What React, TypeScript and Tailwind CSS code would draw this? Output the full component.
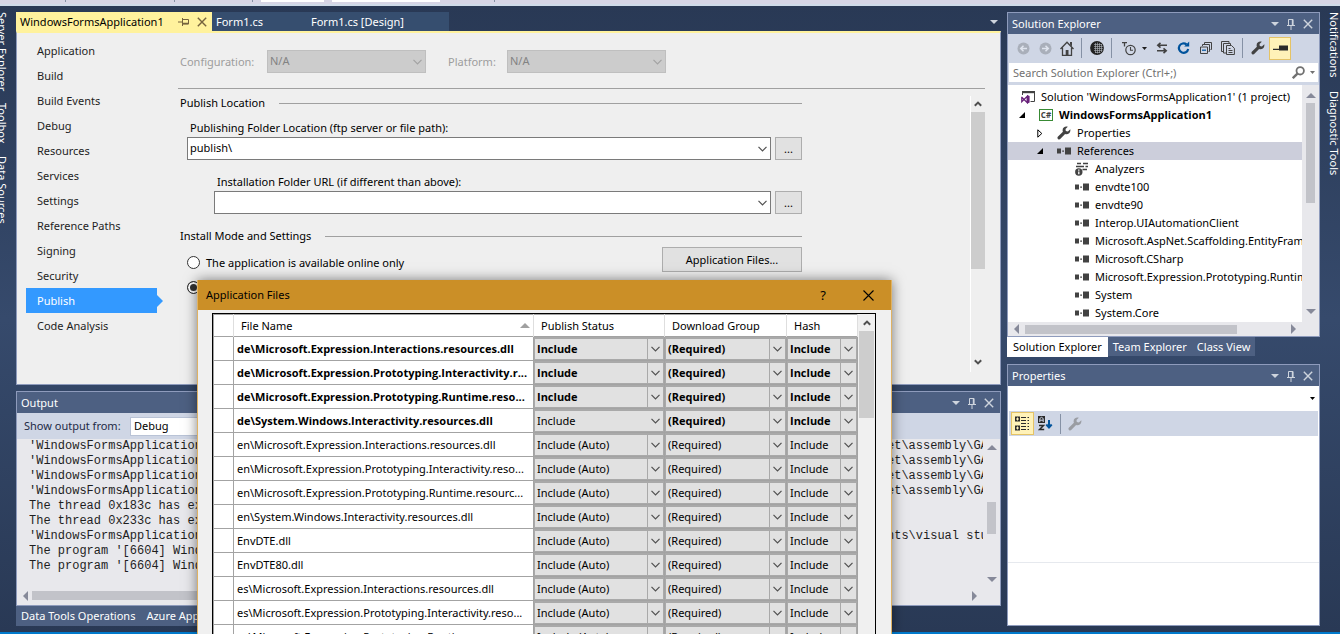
import React from "react";
import clsx from "clsx";

const navItems = [
  "Application",
  "Build",
  "Build Events",
  "Debug",
  "Resources",
  "Services",
  "Settings",
  "Reference Paths",
  "Signing",
  "Security",
  "Publish",
  "Code Analysis",
];

const files = [
  { name: "de\\Microsoft.Expression.Interactions.resources.dll", status: "Include", bold: true },
  { name: "de\\Microsoft.Expression.Prototyping.Interactivity.r...", status: "Include", bold: true },
  { name: "de\\Microsoft.Expression.Prototyping.Runtime.reso...", status: "Include", bold: true },
  { name: "de\\System.Windows.Interactivity.resources.dll", status: "Include", bold: true, editing: true },
  { name: "en\\Microsoft.Expression.Interactions.resources.dll", status: "Include (Auto)" },
  { name: "en\\Microsoft.Expression.Prototyping.Interactivity.reso...", status: "Include (Auto)" },
  { name: "en\\Microsoft.Expression.Prototyping.Runtime.resourc...", status: "Include (Auto)" },
  { name: "en\\System.Windows.Interactivity.resources.dll", status: "Include (Auto)" },
  { name: "EnvDTE.dll", status: "Include (Auto)" },
  { name: "EnvDTE80.dll", status: "Include (Auto)" },
  { name: "es\\Microsoft.Expression.Interactions.resources.dll", status: "Include (Auto)" },
  { name: "es\\Microsoft.Expression.Prototyping.Interactivity.reso...", status: "Include (Auto)" },
  { name: "es\\Microsoft.Expression.Prototyping.Runtime.resourc...", status: "Include (Auto)" },
];

const references = [
  "envdte100",
  "envdte90",
  "Interop.UIAutomationClient",
  "Microsoft.AspNet.Scaffolding.EntityFramework",
  "Microsoft.CSharp",
  "Microsoft.Expression.Prototyping.Runtime",
  "System",
  "System.Core",
];

const outputLines = [
  { head: "'WindowsFormsApplication", tail: "et\\assembly\\GAC" },
  { head: "'WindowsFormsApplication", tail: "et\\assembly\\GAC" },
  { head: "'WindowsFormsApplication", tail: "et\\assembly\\GAC" },
  { head: "'WindowsFormsApplication", tail: "et\\assembly\\GAC" },
  { head: "The thread 0x183c has ex", tail: "" },
  { head: "The thread 0x233c has ex", tail: "" },
  { head: "'WindowsFormsApplication", tail: "nts\\visual stu" },
  { head: "The program '[6604] Wind", tail: "" },
  { head: "The program '[6604] Wind", tail: "" },
];

/* === ICONS === */

function Chevron({ className }: { className?: string }) {
  return (
    <svg viewBox="0 0 9 6" className={clsx("h-[6px] w-[9px] fill-none stroke-current", className)}>
      <path d="M0.5 0.8 L4.5 4.8 L8.5 0.8" strokeWidth="1.2" />
    </svg>
  );
}

function ScrollChevron({ down }: { down?: boolean }) {
  return (
    <svg viewBox="0 0 8 6" className={clsx("h-[6px] w-[8px] shrink-0 fill-none stroke-[#505050]", down && "rotate-180")}>
      <path d="M0.8 4.8 L4 1.6 L7.2 4.8" strokeWidth="2" />
    </svg>
  );
}

function Triangle({ className }: { className?: string }) {
  return (
    <svg viewBox="0 0 10 5" className={clsx("h-[5px] w-[10px] shrink-0 fill-current", className)}>
      <path d="M0 5 L5 0 L10 5 Z" />
    </svg>
  );
}

function Caret({ className }: { className?: string }) {
  return (
    <svg viewBox="0 0 8 4" className={clsx("h-[4px] w-[8px] shrink-0 fill-current", className)}>
      <path d="M0 0 H8 L4 4 Z" />
    </svg>
  );
}

function SideArrow({ right }: { right?: boolean }) {
  return (
    <svg viewBox="0 0 5 10" className={clsx("h-[10px] w-[5px] shrink-0 fill-[#868999]", right && "rotate-180")}>
      <path d="M5 0 V10 L0 5 Z" />
    </svg>
  );
}

function PinIcon({ className }: { className?: string }) {
  return (
    <svg viewBox="0 0 8 12" className={clsx("h-[12px] w-[8px] fill-none stroke-current", className)}>
      <path d="M1.5 7 V1.5 H6 V7 M0 7.5 H8 M4 8 V12" />
      <path d="M5.5 1.5 V7" strokeWidth="1.4" />
    </svg>
  );
}

function CloseIcon({ className }: { className?: string }) {
  return (
    <svg viewBox="0 0 10 10" className={clsx("h-[10px] w-[10px] fill-none stroke-current", className)}>
      <path d="M0.8 0.8 L9.2 9.2 M9.2 0.8 L0.8 9.2" strokeWidth="1.4" />
    </svg>
  );
}

function WrenchIcon({ className }: { className?: string }) {
  return (
    <svg viewBox="0 0 14 14" className={clsx("h-[14px] w-[14px] shrink-0 fill-current", className)}>
      <path d="M13.3 3.2 L10.9 5.4 L8.8 5 L8.5 3 L10.8 0.8 C8.6 -0.1 5.6 1.2 5.6 4.2 C5.6 4.8 5.7 5.3 5.9 5.8 L0.8 10.7 C-0.4 12.2 1.7 14.3 3.2 13.1 L8.1 8 C10.9 9 14 6.6 13.3 3.2 Z" />
    </svg>
  );
}

function ReferenceIcon() {
  return (
    <svg viewBox="0 0 14 8" className="h-[8px] w-[14px] shrink-0 fill-[#424242]">
      <path d="M0 1.5 H4 V6.5 H0 Z M5.2 3.5 H7 V4.8 H5.2 Z M8 0.5 H14 V7.5 H8 Z" />
    </svg>
  );
}

function SearchIcon() {
  return (
    <svg viewBox="0 0 13 13" className="h-[13px] w-[13px] fill-none stroke-[#717171]">
      <circle cx="8.2" cy="4.8" r="3.7" strokeWidth="1.8" />
      <path d="M5.4 7.6 L0.8 12.2" strokeWidth="2.4" />
    </svg>
  );
}

/* === SHARED CONTROLS === */

function Combo({
  label,
  value,
  id,
  disabled,
  className,
}: {
  label?: string;
  value: string;
  id?: string;
  disabled?: boolean;
  className?: string;
}) {
  return (
    <div className={clsx("relative h-[23px]", className)}>
      <select
        id={id}
        aria-label={label}
        disabled={disabled}
        className={clsx(
          "h-full w-full appearance-none border px-[2px] pb-px",
          disabled ? "border-[#bfbfbf] bg-[#cccccc] text-[#838383]" : "border-[#7a7a7a] bg-white text-black"
        )}
      >
        <option>{value}</option>
      </select>
      <Chevron
        className={clsx(
          "pointer-events-none absolute right-[4px] top-[9px]",
          disabled ? "text-[#a3a3a3]" : "text-[#505050]"
        )}
      />
    </div>
  );
}

function CellSelect({ label, value, editing }: { label: string; value: string; editing?: boolean }) {
  return (
    <div className="relative h-[23px] border border-t-2 border-[#a9a9a9] bg-[#e1e1e1]">
      <select aria-label={label} className="h-full w-full appearance-none pl-[2px] pr-[17px] pb-px">
        <option>{value}</option>
      </select>
      <span
        className={clsx(
          "pointer-events-none absolute inset-y-0 right-0 flex w-[16px] items-center justify-center text-[#505050]",
          !editing && "border-l border-[#a9a9a9]"
        )}
      >
        <Chevron />
      </span>
    </div>
  );
}

function PanelTitle({ title }: { title: string }) {
  return (
    <header className="flex h-[21px] shrink-0 items-center bg-[#4d6082] pl-1 pr-[6px] text-white">
      <h2 className="flex-1">{title}</h2>
      <div className="flex items-center gap-2 text-[#ced4dd]">
        <button aria-label={`${title} window position`}>
          <Caret />
        </button>
        <button aria-label={`Auto hide ${title}`}>
          <PinIcon />
        </button>
        <button aria-label={`Close ${title}`}>
          <CloseIcon />
        </button>
      </div>
    </header>
  );
}

function Rail({ items, className }: { items: string[]; className?: string }) {
  return (
    <nav className={clsx("flex shrink-0 flex-col text-white", className)}>
      {items.map((item) => (
        <button key={item} className="w-4 whitespace-nowrap text-left leading-4 [writing-mode:vertical-rl]">
          {item}
        </button>
      ))}
    </nav>
  );
}

/* === DOCUMENT AREA === */

function DocumentTabs() {
  return (
    <div className="flex h-[19px] shrink-0 items-stretch text-white">
      <div className="flex w-[196px] items-center bg-[#fff29d] pl-1 text-black">
        <span className="flex-1">WindowsFormsApplication1</span>
        <button aria-label="Pin tab" className="px-1 text-[#75633d]">
          <PinIcon className="rotate-90" />
        </button>
        <button aria-label="Close tab" className="px-[5px] text-[#75633d]">
          <CloseIcon />
        </button>
      </div>
      <button className="w-[95px] bg-[#364e6f] pl-1 text-left">Form1.cs</button>
      <button className="w-[142px] bg-[#364e6f] pl-1 text-left">Form1.cs [Design]</button>
      <button aria-label="Open documents" className="ml-auto px-[3px] text-[#ced4dd]">
        <Caret />
      </button>
    </div>
  );
}

function SectionHeading({ children }: { children: React.ReactNode }) {
  return (
    <div className="flex h-[18px] items-center gap-[14px]">
      <h3>{children}</h3>
      <span className="h-px flex-1 bg-[#a0a0a0]" />
    </div>
  );
}

function BrowseButton({ label }: { label: string }) {
  return (
    <button aria-label={label} className="h-[23px] w-[27px] shrink-0 border border-[#adadad] bg-[#e1e1e1]">
      ...
    </button>
  );
}

function PublishPage() {
  return (
    <div className="flex min-h-0 flex-1 border border-t-2 border-[#8e9bbc] border-t-[#fff29d] bg-[#efefef] text-[#1e1e1e]">
      <nav className="w-[147px] shrink-0 pl-[9px] pt-[5px]">
        {navItems.map((item) => {
          const active = item === "Publish";
          return (
            <div key={item} className="flex h-[25px] items-center">
              <a
                href="#"
                className={clsx("flex h-full w-[131px] items-center pl-[11px]", active && "bg-[#3399ff] text-white")}
              >
                {item}
              </a>
              {active && (
                <svg viewBox="0 0 6 12" className="h-[12px] w-[6px] fill-[#3399ff]">
                  <path d="M0 0 L6 6 L0 12 Z" />
                </svg>
              )}
            </div>
          );
        })}
      </nav>

      <div className="flex min-w-0 flex-1 flex-col pb-3 pl-[14px] pr-[15px] pt-[17px]">
        <div className="flex h-[39px] items-start border-b border-[#a0a0a0] pl-[2px] text-[#9d9d9d]">
          <label htmlFor="configuration" className="w-[87px] leading-[23px]">
            Configuration:
          </label>
          <Combo id="configuration" value="N/A" disabled className="w-[159px]" />
          <label htmlFor="platform" className="ml-[22px] w-[59px] leading-[23px]">
            Platform:
          </label>
          <Combo id="platform" value="N/A" disabled className="w-[159px]" />
        </div>

        <div className="flex min-h-0 flex-1 text-black">
          <div className="min-w-0 flex-1 overflow-hidden pl-[2px] pt-[5px]">
            <div className="w-[622px] max-w-full">
              <SectionHeading>Publish Location</SectionHeading>
              <div className="pl-[7px] pt-2">
                <label htmlFor="publish-folder" className="block pl-[3px] leading-4">
                  Publishing Folder Location (ftp server or file path):
                </label>
                <div className="mt-px flex gap-1">
                  <Combo id="publish-folder" value="publish\" className="flex-1" />
                  <BrowseButton label="Browse publishing folder" />
                </div>
              </div>
              <div className="pl-[34px] pt-[14px]">
                <label htmlFor="install-folder" className="block pl-[3px] leading-4">
                  Installation Folder URL (if different than above):
                </label>
                <div className="mt-px flex gap-1">
                  <Combo id="install-folder" value="" className="flex-1" />
                  <BrowseButton label="Browse installation folder" />
                </div>
              </div>

              <div className="pt-[13px]">
                <SectionHeading>Install Mode and Settings</SectionHeading>
              </div>
              <div className="flex items-start justify-between pl-[7px] pt-[2px]">
                <div className="flex flex-col">
                  <label className="flex h-[25px] items-center gap-[6px] pt-[6px]">
                    <input
                      type="radio"
                      name="mode"
                      className="h-[13px] w-[13px] appearance-none rounded-full border border-[#333] bg-white"
                    />
                    The application is available online only
                  </label>
                  <label className="flex h-[25px] items-center gap-[6px] pt-[6px]">
                    <input
                      type="radio"
                      name="mode"
                      aria-label="Available offline as well"
                      defaultChecked
                      className="h-[13px] w-[13px] appearance-none rounded-full border border-[#333] bg-[#333] shadow-[inset_0_0_0_2px_white]"
                    />
                  </label>
                </div>
                <button className="h-[25px] w-[140px] border border-[#adadad] bg-[#e1e1e1]">Application Files...</button>
              </div>
            </div>
          </div>

          <div className="mt-[7px] flex w-[15px] flex-col items-center border-l border-white">
            <span className="flex h-4 items-center">
              <ScrollChevron />
            </span>
            <span className="h-[157px] w-full bg-[#cdcdcd]" />
            <span className="mt-auto flex h-5 items-center">
              <ScrollChevron down />
            </span>
          </div>
        </div>
      </div>
    </div>
  );
}

/* === OUTPUT === */

function OutputPanel() {
  return (
    <section className="mt-[6px] flex h-[215px] shrink-0 flex-col border border-[#8e9bbc] bg-[#e8e8ec]">
      <PanelTitle title="Output" />
      <div className="flex h-[26px] shrink-0 items-center bg-[#cfd6e5] pl-[7px] text-[#1e2a45]">
        <label htmlFor="output-source" className="w-[106px]">
          Show output from:
        </label>
        <select
          id="output-source"
          className="h-[19px] w-[230px] appearance-none border border-[#b9c3d6] bg-white pl-[3px] text-black"
        >
          <option>Debug</option>
        </select>
      </div>
      <div className="flex min-h-0 flex-1">
        <div className="flex min-w-0 flex-1 flex-col">
          <div className="flex-1 overflow-hidden pl-[12px] font-['Liberation_Mono',monospace] text-[12px] leading-[15px] text-[#1e1e1e]">
            {outputLines.map((line, i) => (
              <div key={i} className="flex whitespace-pre">
                <span className="min-w-0 flex-1 overflow-hidden">{line.head}</span>
                <span className="w-[96px] overflow-hidden">{line.tail}</span>
              </div>
            ))}
          </div>
          <div className="flex h-[19px] items-center gap-1 pl-[6px] pr-[6px]">
            <SideArrow />
            <span className="h-[9px] w-[640px] bg-[#c2c3c9]" />
            <span className="ml-auto flex">
              <SideArrow right />
            </span>
          </div>
        </div>
        <div className="flex w-[17px] flex-col items-center pb-[23px] pt-[6px] text-[#868999]">
          <Triangle />
          <span className="mt-[52px] h-[32px] w-[9px] bg-[#c2c3c9]" />
          <Triangle className="mt-auto rotate-180" />
        </div>
      </div>
    </section>
  );
}

/* === SOLUTION EXPLORER === */

function ToolDivider() {
  return <span className="h-5 w-px bg-[#8591a5]" />;
}

function SolutionToolbar() {
  return (
    <div className="flex h-[28px] shrink-0 items-center bg-[#cfd6e5] pl-[9px] text-[#424242]">
      <button aria-label="Back" className="mr-[9px]">
        <svg viewBox="0 0 13 13" className="h-[13px] w-[13px]">
          <circle cx="6.5" cy="6.5" r="6" fill="#a9afba" />
          <path d="M10 6.5 H4 M6.5 3.7 L3.7 6.5 L6.5 9.3" fill="none" stroke="#dfe4ee" strokeWidth="1.5" />
        </svg>
      </button>
      <button aria-label="Forward" className="mr-[8px]">
        <svg viewBox="0 0 13 13" className="h-[13px] w-[13px] rotate-180">
          <circle cx="6.5" cy="6.5" r="6" fill="#a9afba" />
          <path d="M10 6.5 H4 M6.5 3.7 L3.7 6.5 L6.5 9.3" fill="none" stroke="#dfe4ee" strokeWidth="1.5" />
        </svg>
      </button>
      <button aria-label="Home" className="mr-[7px]">
        <svg viewBox="0 0 14 15" className="h-[15px] w-[14px]">
          <path d="M0.5 8 L7 1.2 L13.5 8 M2.5 6.8 V14.3 H11.5 V6.8" fill="none" stroke="currentColor" strokeWidth="1.3" />
          <path d="M10 1 H12 V5.5 L10 3.5 Z M5.7 9 H8.5 V14.5 H5.7 Z" fill="currentColor" />
        </svg>
      </button>
      <ToolDivider />
      <button aria-label="Web view" className="ml-2 mr-[7px]">
        <svg viewBox="0 0 14 14" className="h-[14px] w-[14px]">
          <circle cx="7" cy="7" r="6.9" fill="#222222" />
          <path
            d="M5.5 2 V12 M7.5 1.5 V12.5 M9.5 2 V12 M11.5 3 V11 M4 3.5 H12 M4 5.5 H12.8 M4 7.5 H12.8 M4 9.5 H12.4 M5 11.5 H10.5"
            stroke="#b4b8c0"
            strokeWidth="0.6"
          />
        </svg>
      </button>
      <ToolDivider />
      <button aria-label="Pending changes filter" className="ml-[10px] flex items-center gap-[6px]">
        <svg viewBox="0 0 14 15" className="h-[15px] w-[14px]">
          <path d="M0 1.6 H5 M2.5 1.5 V5.5" fill="none" stroke="currentColor" strokeWidth="1.3" />
          <circle cx="8.5" cy="9" r="4.7" fill="none" stroke="currentColor" strokeWidth="1.2" />
          <path d="M8.5 6 V9.3 H11" fill="none" stroke="currentColor" strokeWidth="1.1" />
        </svg>
        <svg viewBox="0 0 5 3" className="h-[3px] w-[5px] fill-[#1e1e1e]">
          <path d="M0 0 H5 L2.5 3 Z" />
        </svg>
      </button>
      <button aria-label="Sync" className="ml-[9px]">
        <svg viewBox="0 0 12 12" className="h-[12px] w-[12px] fill-none stroke-current">
          <path d="M11 3.2 H2 M4.5 0.8 L1.8 3.2 L4.5 5.6 M1 8.8 H10 M7.5 6.4 L10.2 8.8 L7.5 11.2" strokeWidth="1.6" />
        </svg>
      </button>
      <button aria-label="Refresh" className="ml-[9px]">
        <svg viewBox="0 0 13 14" className="h-[14px] w-[13px]">
          <path d="M9.5 3.4 A4.7 4.7 0 1 0 11.2 8" fill="none" stroke="#00539c" strokeWidth="2.2" />
          <path d="M7.2 5.4 L12.2 5.4 L12.2 0.4 Z" fill="#00539c" />
        </svg>
      </button>
      <button aria-label="Collapse all" className="ml-[10px]">
        <svg viewBox="0 0 12 12" className="h-[12px] w-[12px] fill-none stroke-current">
          <path d="M0.5 5 H7.5 V11.5 H0.5 Z M2.5 4 V2.5 H9.5 V9.5 H8.5 M4.5 2 V0.5 H11.5 V7.5 H10.5" />
          <path d="M2 8.2 H6" stroke="#00539c" strokeWidth="1.2" />
        </svg>
      </button>
      <button aria-label="Show all files" className="ml-[9px]">
        <svg viewBox="0 0 14 14" className="h-[14px] w-[14px] fill-none stroke-current">
          <path d="M3 10.5 H0.5 V0.5 H8 V2 M5 12 H2.5 V2.5 H9.5 V4" />
          <path d="M5.5 4.5 H10.5 L13.4 7.3 V13.5 H5.5 Z M7.5 7.5 H9.5 M7.5 9.5 H11.5 M7.5 11.5 H11.5" />
        </svg>
      </button>
      <span className="ml-[7px] mr-[8px] flex">
        <ToolDivider />
      </span>
      <button aria-label="Properties">
        <WrenchIcon />
      </button>
      <button
        aria-label="Preview selected items"
        className="ml-1 flex h-[23px] w-[22px] items-center justify-center border border-[#e5c365] bg-[#fff2b8]"
      >
        <svg viewBox="0 0 15 6" className="h-[6px] w-[15px] fill-[#2a2a2a]">
          <path d="M0 3.8 H6 V0.5 H15 V5.5 H6 V5 H0 Z" />
        </svg>
      </button>
    </div>
  );
}

function SolutionTree() {
  return (
    <ul className="min-w-0 flex-1 overflow-hidden whitespace-nowrap bg-white pt-[3px] text-black [&>li]:flex [&>li]:h-[18px] [&>li]:items-center">
      <li className="pl-[13px]">
        <svg viewBox="0 0 15 14" className="mr-[5px] h-[14px] w-[15px] shrink-0">
          <path d="M1.5 5 V2 H13.5 V11.5 H9.5" fill="none" stroke="#424242" />
          <path d="M1 1 H14 V3.2 H1 Z" fill="#424242" />
          <path d="M0.8 6.8 V11.6 L6.2 6.4 V12.6 L0.8 7.2" fill="none" stroke="#68217a" strokeWidth="1.3" />
          <path d="M6 5 L8.6 6 V12.5 L6 13.8 Z" fill="#68217a" />
        </svg>
        Solution 'WindowsFormsApplication1' (1 project)
      </li>
      <li className="pl-[11px] font-['Open_Sans',sans-serif] font-bold">
        <svg viewBox="0 0 6 6" className="mr-[14px] h-[6px] w-[6px] shrink-0 fill-black">
          <path d="M6 0 V6 H0 Z" />
        </svg>
        <span className="mr-[6px] flex h-[12px] w-[14px] shrink-0 items-center justify-center border border-[#388a34] text-[8px] leading-none text-[#424242]">
          C#
        </span>
        WindowsFormsApplication1
      </li>
      <li className="pl-[29px]">
        <svg viewBox="0 0 6 9" className="mr-[14px] h-[9px] w-[6px] shrink-0 fill-white stroke-black">
          <path d="M0.8 0.8 L4.8 4.5 L0.8 8.2 Z" />
        </svg>
        <WrenchIcon className="mr-[6px] text-[#424242]" />
        Properties
      </li>
      <li className="bg-[#ccceDB] pl-[29px]">
        <svg viewBox="0 0 6 6" className="mr-[14px] h-[6px] w-[6px] shrink-0 fill-black">
          <path d="M6 0 V6 H0 Z" />
        </svg>
        <span className="mr-[6px] flex">
          <ReferenceIcon />
        </span>
        References
      </li>
      <li className="pl-[67px]">
        <svg viewBox="0 0 14 14" className="mr-[6px] h-[14px] w-[14px] shrink-0">
          <path d="M2 1.5 H6 M8 1.5 H13 M1 4.5 H9 M10.5 4.5 H13 M7.5 7.5 H12" stroke="#424242" strokeWidth="1.6" />
          <circle cx="3.8" cy="10" r="3.7" fill="#424242" />
          <path d="M3.8 7.5 V8.8 M3.8 9.5 V12.2" stroke="white" strokeWidth="1.3" />
        </svg>
        Analyzers
      </li>
      {references.map((name) => (
        <li key={name} className="gap-[6px] pl-[67px]">
          <ReferenceIcon />
          {name}
        </li>
      ))}
    </ul>
  );
}

function SolutionExplorer() {
  return (
    <>
      <section className="flex shrink-0 flex-col border border-[#8e9bbc] bg-[#e8e8ec]">
        <PanelTitle title="Solution Explorer" />
        <SolutionToolbar />
        <div className="flex h-[21px] shrink-0 items-center border border-[#cfd6e5] bg-white pl-1 pr-[3px]">
          <input
            type="text"
            aria-label="Search Solution Explorer"
            placeholder="Search Solution Explorer (Ctrl+;)"
            className="min-w-0 flex-1 outline-none placeholder:text-[#717171]"
          />
          <button aria-label="Search" className="mr-[5px]">
            <SearchIcon />
          </button>
          <svg viewBox="0 0 5 3" className="h-[3px] w-[5px] fill-[#717171]">
            <path d="M0 0 H5 L2.5 3 Z" />
          </svg>
        </div>
        <div className="flex border-t-2 border-[#cfd6e5]">
          <SolutionTree />
          <div className="flex w-[17px] shrink-0 flex-col items-center pb-2 pt-2 text-[#868999]">
            <Triangle />
            <span className="mt-[5px] h-[100px] w-[9px] bg-[#c2c3c9]" />
            <Triangle className="mt-auto rotate-180" />
          </div>
        </div>
        <div className="flex h-[14px] shrink-0 items-center gap-[6px] pl-[6px] pr-[23px]">
          <SideArrow />
          <span className="h-[9px] w-[212px] bg-[#c2c3c9]" />
          <span className="ml-auto flex">
            <SideArrow right />
          </span>
        </div>
      </section>
      <div className="flex h-[21px] shrink-0 items-start">
        <button className="h-[20px] bg-white px-[6px] text-black">Solution Explorer</button>
        <button className="h-[19px] bg-[#4d6082] px-[5px] text-white">Team Explorer</button>
        <button className="h-[19px] bg-[#4d6082] px-[5px] text-white">Class View</button>
      </div>
    </>
  );
}

/* === PROPERTIES === */

function PropertiesPanel() {
  return (
    <section className="mt-[6px] flex min-h-0 flex-1 flex-col border border-[#8e9bbc] bg-white">
      <PanelTitle title="Properties" />
      <div className="relative h-[25px] shrink-0">
        <select aria-label="Selected object" className="h-full w-full appearance-none">
          <option></option>
        </select>
        <svg viewBox="0 0 5 3" className="pointer-events-none absolute right-1 top-[11px] h-[3px] w-[5px] fill-black">
          <path d="M0 0 H5 L2.5 3 Z" />
        </svg>
      </div>
      <div className="mx-px flex h-[25px] shrink-0 items-center bg-[#cfd6e5] pl-[2px]">
        <button
          aria-label="Categorized"
          className="flex h-[23px] w-[23px] items-center justify-center border border-[#e5c365] bg-[#fff2b8]"
        >
          <svg viewBox="0 0 15 15" className="h-[15px] w-[15px] fill-none stroke-[#2a2a2a]">
            <path d="M0 0.5 H5 V5.5 H0 Z M0 9.5 H5 V14.5 H0 Z" fill="#2a2a2a" stroke="none" />
            <path d="M1 3 H4 M2.5 1.5 V4.5 M1 12 H4 M2.5 10.5 V13.5" stroke="#fff2b8" />
            <path d="M6 1.5 H11 M12.5 1.5 H14 M6 4.5 H11 M12.5 4.5 H14 M6 7.5 H11 M12.5 7.5 H14 M6 10.5 H11 M12.5 10.5 H14 M6 13.5 H11 M12.5 13.5 H14" strokeWidth="1.2" />
          </svg>
        </button>
        <button aria-label="Alphabetical" className="ml-1">
          <svg viewBox="0 0 15 15" className="h-[15px] w-[15px] fill-none">
            <path d="M0 0 H7 V7 H0 Z" fill="#2a2a2a" />
            <path d="M1.8 6 V2.5 L3.5 1.3 L5.2 2.5 V6 M2 4.2 H5" stroke="#cfd6e5" />
            <path d="M1 9.5 H5.5 L1.5 13.5 H6.2" stroke="#2a2a2a" strokeWidth="1.5" />
            <path d="M11 4 V12 M8.3 8.5 L11 11.5 L13.7 8.5" stroke="#00539c" strokeWidth="2" />
          </svg>
        </button>
        <span className="ml-[7px] mr-[7px] flex">
          <ToolDivider />
        </span>
        <button aria-label="Property pages">
          <WrenchIcon className="text-[#9a9da3]" />
        </button>
      </div>
      <div className="flex-1" />
      <div className="h-[63px] shrink-0 border-t border-[#e6e9ee]" />
    </section>
  );
}

/* === APPLICATION FILES DIALOG === */

function FilesDialog() {
  return (
    <div
      role="dialog"
      aria-label="Application Files"
      className="absolute bottom-0 left-[197px] top-[280px] flex w-[695px] flex-col border-x border-[#dfb263] bg-[#f0f0f0] text-black shadow-[0_0_12px_rgba(0,0,0,0.5)]"
    >
      <header className="flex h-[30px] shrink-0 items-center bg-[#cb8f27] pl-2 pr-[17px]">
        <h2 className="flex-1">Application Files</h2>
        <button aria-label="Help" className="mr-[37px] text-[13px]">
          ?
        </button>
        <button aria-label="Close dialog">
          <svg viewBox="0 0 11 11" className="h-[11px] w-[11px] fill-none stroke-black">
            <path d="M0.5 0.5 L10.5 10.5 M10.5 0.5 L0.5 10.5" strokeWidth="1.1" />
          </svg>
        </button>
      </header>
      <div className="ml-[14px] mr-[15px] mt-[3px] flex min-h-0 flex-1 overflow-hidden border border-b-0 border-black">
        <table className="w-full table-fixed border-collapse self-start border-l border-t border-[#a3a3a3] bg-white">
          <colgroup>
            <col className="w-[20px]" />
            <col />
            <col className="w-[131px]" />
            <col className="w-[122px]" />
            <col className="w-[71px]" />
          </colgroup>
          <thead>
            <tr className="h-[22px] text-left [&>th]:border-r [&>th]:border-[#dedede] [&>th]:p-0 [&>th]:pl-[7px] [&>th]:font-normal">
              <th />
              <th>
                <div className="flex items-center justify-between pr-[3px]">
                  File Name
                  <Triangle className="text-[#a0a0a0]" />
                </div>
              </th>
              <th>Publish Status</th>
              <th>Download Group</th>
              <th>Hash</th>
            </tr>
          </thead>
          <tbody>
            {files.map((file) => (
              <tr
                key={file.name}
                className={clsx(
                  "h-[24px] [&>td]:border [&>td]:border-[#a3a3a3] [&>td]:p-0",
                  file.bold && "font-['Open_Sans',sans-serif] font-bold"
                )}
              >
                <td />
                <td>
                  <div className="overflow-hidden whitespace-nowrap pl-[3px]">{file.name}</div>
                </td>
                <td className={clsx(file.editing && "font-['Noto_Sans',sans-serif] font-normal")}>
                  <CellSelect label={`Publish status of ${file.name}`} value={file.status} editing={file.editing} />
                </td>
                <td>
                  <CellSelect label={`Download group of ${file.name}`} value="(Required)" />
                </td>
                <td>
                  <CellSelect label={`Hash of ${file.name}`} value="Include" />
                </td>
              </tr>
            ))}
          </tbody>
        </table>
        <div className="flex w-[17px] shrink-0 flex-col items-center px-px">
          <span className="flex h-[17px] items-center">
            <ScrollChevron />
          </span>
          <span className="h-[87px] w-full bg-[#cdcdcd]" />
        </div>
      </div>
    </div>
  );
}

export default function App() {
  return (
    <div className="relative flex h-screen flex-col overflow-hidden bg-[#293955] font-['Noto_Sans',sans-serif] text-[11px] leading-4">
      {/* === TOOLBAR EDGE === */}
      <div className="flex h-[6px] shrink-0 items-start border-b-2 border-[#cfdbe9] bg-[#d6d5e5] pl-[65px]">
        <span className="h-[2px] w-px bg-[#8591a5]" />
        <span className="ml-[108px] h-[2px] w-px bg-[#8591a5]" />
        <span className="ml-[77px] h-[2px] w-px bg-[#8591a5]" />
        <span className="ml-2 h-[2px] w-[63px] bg-white" />
        <span className="ml-2 h-[2px] w-[108px] bg-white" />
        <span className="ml-[54px] h-[2px] w-px bg-[#8591a5]" />
      </div>

      <div className="flex min-h-0 flex-1 bg-linear-to-b from-[#293955] via-[#364a6c] to-[#293955] pb-[6px] pt-[6px]">
        <Rail items={["Server Explorer", "Toolbox", "Data Sources"]} className="-ml-[6px] mr-[6px] w-4 gap-3" />
        <main className="flex min-w-0 flex-1 flex-col">
          <DocumentTabs />
          <PublishPage />
          <OutputPanel />
          <div className="flex h-[20px] shrink-0 text-white">
            <button className="bg-[#4d6082] px-[5px]">Data Tools Operations</button>
            <button className="bg-[#4d6082] px-[6px]">Azure App</button>
          </div>
        </main>
        <aside className="ml-[6px] flex w-[313px] shrink-0 flex-col">
          <SolutionExplorer />
          <PropertiesPanel />
        </aside>
        <Rail items={["Notifications", "Diagnostic Tools"]} className="w-5 gap-[14px] pl-[6px]" />
      </div>

      <footer className="h-[2px] shrink-0 bg-[#007acc]" />
      <FilesDialog />
    </div>
  );
}
